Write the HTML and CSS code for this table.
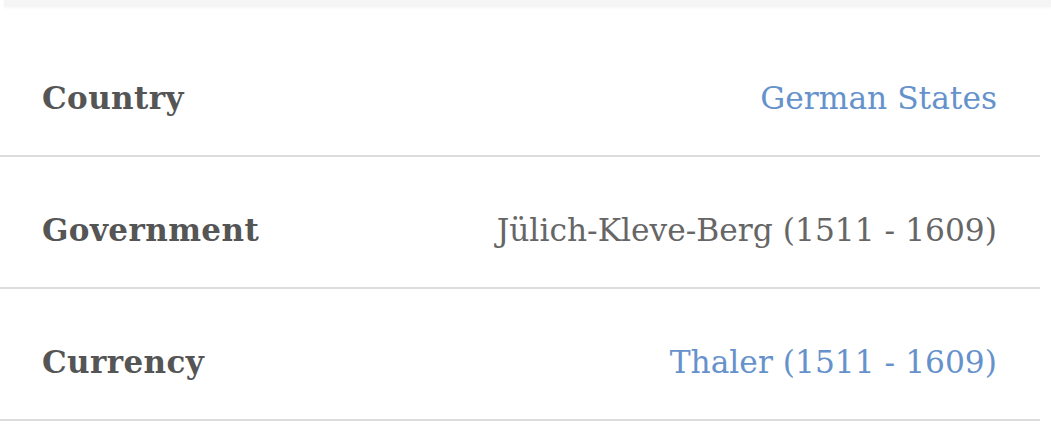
FILE: index.html
```html
<!DOCTYPE html>
<html lang="en">
<head>
  <meta charset="UTF-8" />
  <meta name="viewport" content="width=device-width, initial-scale=1.0"/>
  <title>Details</title>
  <link rel="stylesheet" href="styles.css">
</head>
<body>
  <div class="top-card"></div>
  <div class="details">
    <div class="row">
      <span class="label">Country</span>
      <a class="value link" href="#">German States</a>
    </div>
    <div class="row">
      <span class="label">Government</span>
      <span class="value">Jülich-Kleve-Berg (1511 - 1609)</span>
    </div>
    <div class="row">
      <span class="label">Currency</span>
      <a class="value link" href="#">Thaler (1511 - 1609)</a>
    </div>
  </div>
</body>
</html>
```

FILE: styles.css
```css
body {
  margin: 0;
  padding: 0;
  background-color: #fff;
  font-family: "DejaVu Serif", "Liberation Serif", serif;
}

.top-card {
  margin-left: 4px;
  height: 7px;
  background-color: #f5f5f5;
  box-shadow: 0 1px 3px rgba(0, 0, 0, 0.04);
}

.details {
  width: 1040px;
  margin-top: 18px;
}

.row {
  display: flex;
  justify-content: space-between;
  align-items: center;
  height: 114px;
  padding: 16px 43px 0 42px;
  border-bottom: 2px solid #dcdcdc;
}

.label {
  font-size: 31px;
  font-weight: bold;
  color: #555;
  letter-spacing: 0.4px;
}

.value {
  font-size: 31.3px;
  color: #666;
}

.link {
  color: #6692cc;
  text-decoration: none;
}
```
